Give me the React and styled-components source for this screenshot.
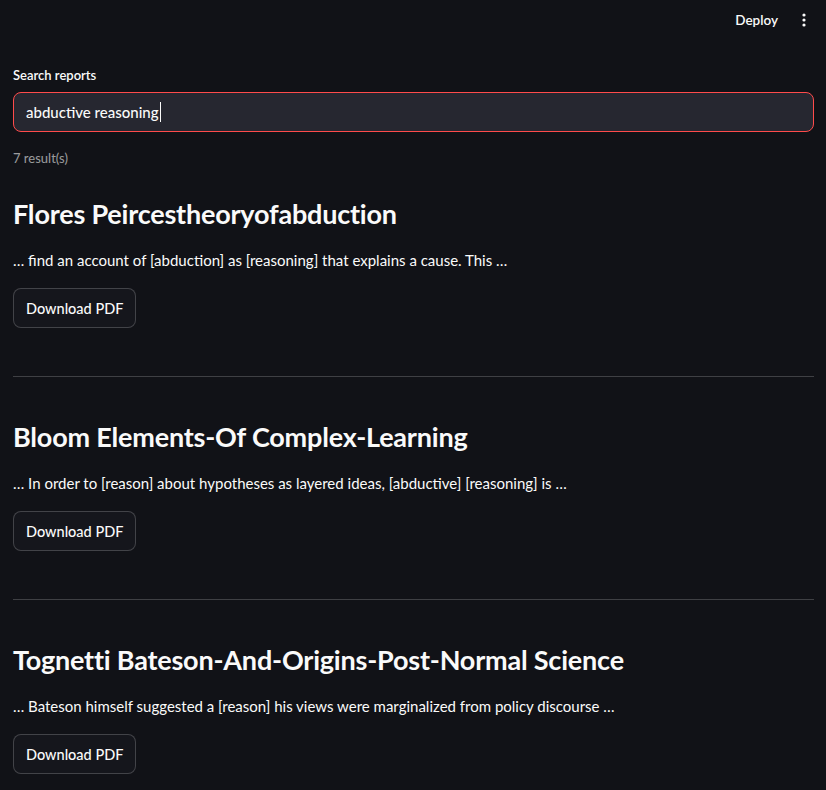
import React from "react";
import styled, { createGlobalStyle } from "styled-components";

const Global = createGlobalStyle`
  html, body { margin: 0; padding: 0; background: #111217; }
  body { font-family: "Lato", "Liberation Sans", sans-serif; color: #fafafa; }
  * { box-sizing: border-box; }
`;

const Page = styled.div`
  min-height: 790px;
  background: #111217;
  display: flex;
  flex-direction: column;
`;

const Header = styled.header`
  height: 40px;
  display: flex;
  align-items: center;
  justify-content: flex-end;
  gap: 10px;
  padding: 0 14px 0 0;
`;

const HeaderButton = styled.button`
  background: transparent;
  border: none;
  color: #fafafa;
  font-family: inherit;
  font-size: 13.5px;
  font-weight: 600;
  padding: 0 8px;
  height: 32px;
  cursor: pointer;
`;

const IconButton = styled.button`
  background: transparent;
  border: none;
  color: #fafafa;
  padding: 0;
  width: 16px;
  height: 32px;
  display: flex;
  align-items: center;
  justify-content: center;
`;

const Main = styled.main`
  padding: 25px 12px 0 13px;
  display: flex;
  flex-direction: column;
`;

const Label = styled.label`
  font-size: 13px;
  font-weight: 600;
  line-height: 20px;
  margin-bottom: 7px;
`;

const InputBox = styled.div`
  height: 40px;
  border: 1px solid #ff4b4b;
  border-radius: 8px;
  background: #262730;
  display: flex;
  align-items: center;
  padding: 0 12px;
  font-size: 15px;
  font-weight: 500;
`;

const Caret = styled.span`
  display: inline-block;
  width: 1.5px;
  height: 20px;
  background: #fafafa;
  margin-left: 1px;
`;

const Count = styled.div`
  margin-top: 16px;
  font-size: 13px;
  line-height: 20px;
  color: rgba(250, 250, 250, 0.6);
  margin-bottom: 29px;
`;

const Result = styled.section`
  display: flex;
  flex-direction: column;
  align-items: flex-start;
`;

const Title = styled.h3`
  margin: 0;
  font-size: 27px;
  font-weight: 700;
  line-height: 34px;
  letter-spacing: -0.2px;
`;

const Snippet = styled.p`
  margin: 16px 0 0;
  font-size: 15px;
  line-height: 26px;
`;

const DownloadButton = styled.button`
  margin-top: 15px;
  height: 40px;
  padding: 0 12px;
  border-radius: 8px;
  border: 1px solid rgba(250, 250, 250, 0.2);
  background: #15161c;
  color: #fafafa;
  font-family: inherit;
  font-size: 14.5px;
  font-weight: 500;
`;

const Divider = styled.hr`
  width: 100%;
  margin: 48px 0 43px;
  border: none;
  border-top: 1px solid rgba(250, 250, 250, 0.2);
`;

const results = [
  {
    title: "Flores Peircestheoryofabduction",
    snippet: "… find an account of [abduction] as [reasoning] that explains a cause. This …",
  },
  {
    title: "Bloom Elements-Of Complex-Learning",
    snippet: "… In order to [reason] about hypotheses as layered ideas, [abductive] [reasoning] is …",
  },
  {
    title: "Tognetti Bateson-And-Origins-Post-Normal Science",
    snippet: "… Bateson himself suggested a [reason] his views were marginalized from policy discourse …",
  },
];

export default function App() {
  return (
    <Page>
      <Global />
      <Header>
        <HeaderButton>Deploy</HeaderButton>
        <IconButton aria-label="menu">
          <svg width="4" height="14" viewBox="0 0 4 14">
            <circle cx="2" cy="2" r="1.6" fill="#fafafa" />
            <circle cx="2" cy="7" r="1.6" fill="#fafafa" />
            <circle cx="2" cy="12" r="1.6" fill="#fafafa" />
          </svg>
        </IconButton>
      </Header>
      <Main>
        <Label>Search reports</Label>
        <InputBox>
          abductive reasoning
          <Caret />
        </InputBox>
        <Count>7 result(s)</Count>
        {results.map((r, i) => (
          <Result key={i}>
            <Title>{r.title}</Title>
            <Snippet>{r.snippet}</Snippet>
            <DownloadButton>Download PDF</DownloadButton>
            <Divider />
          </Result>
        ))}
      </Main>
    </Page>
  );
}
